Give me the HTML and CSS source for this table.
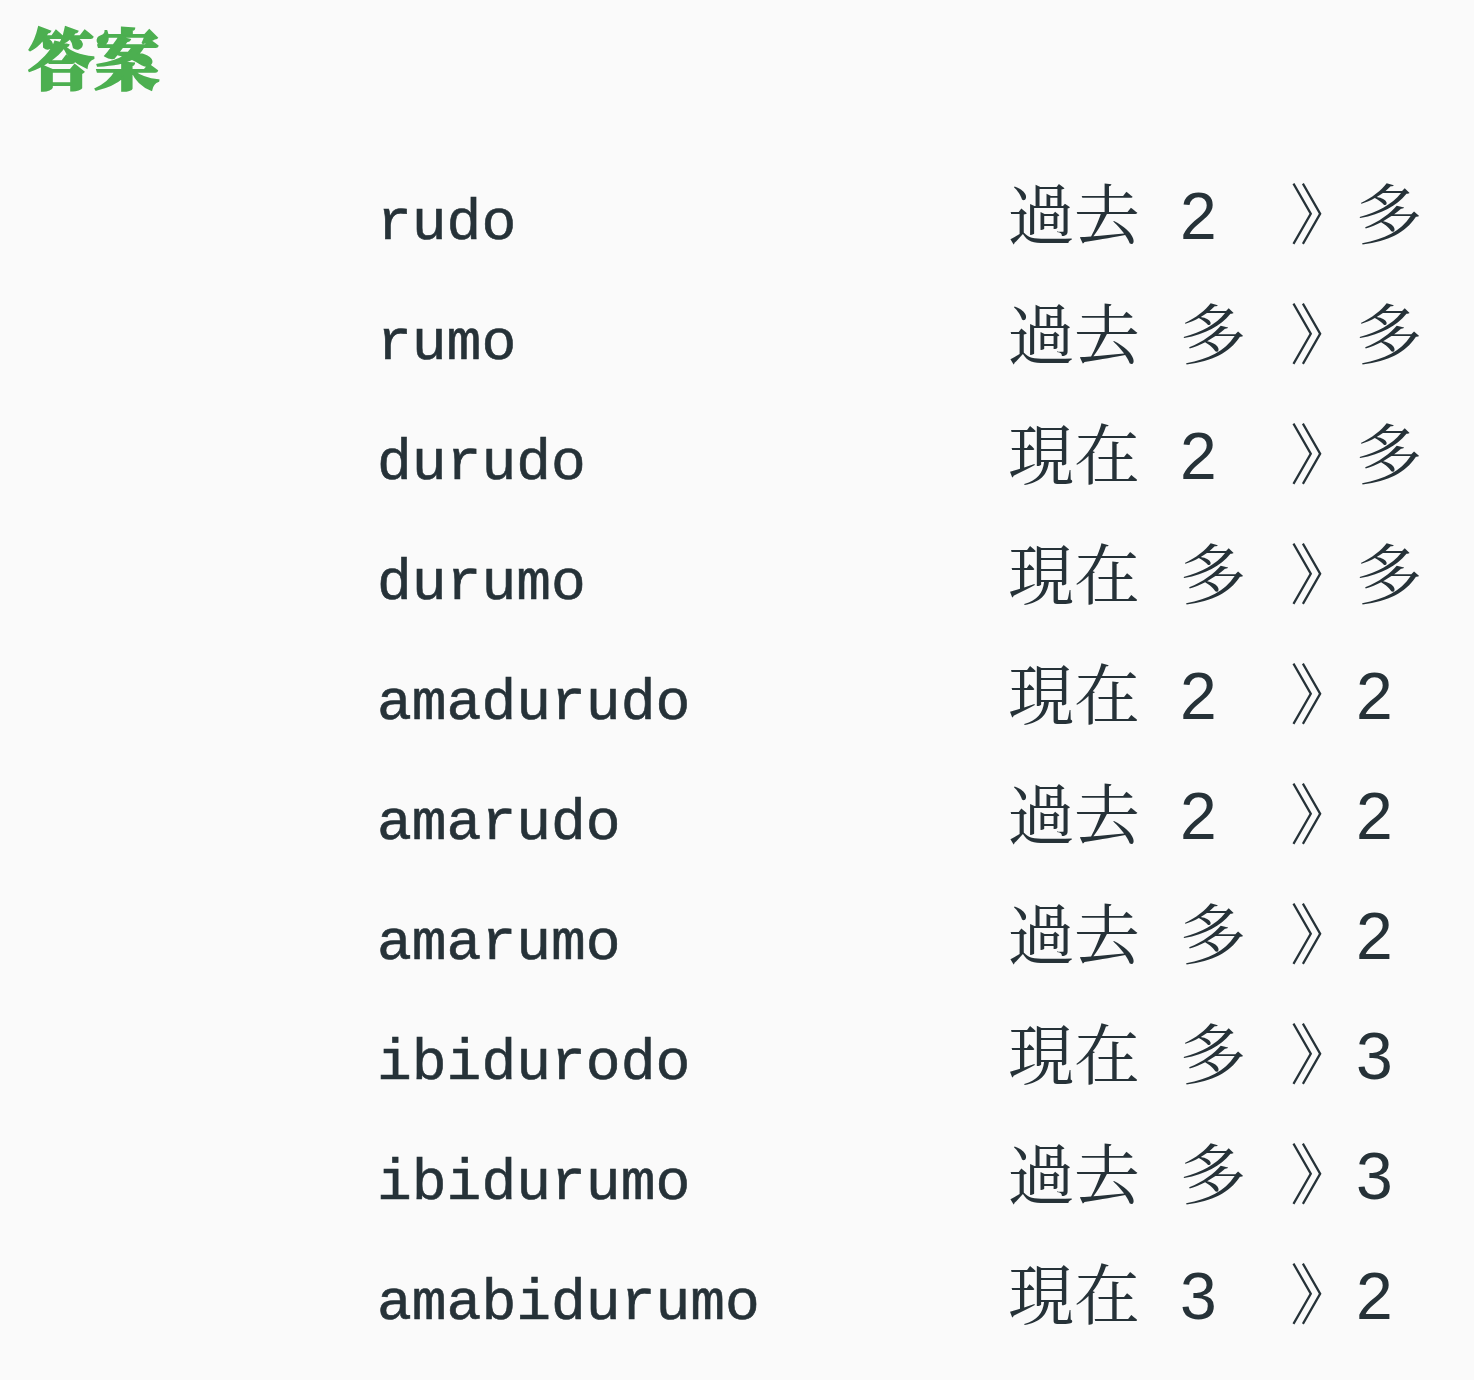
FILE: index.html
```html
<!DOCTYPE html>
<html lang="ja">
<head>
<meta charset="utf-8">
<title>答案</title>
<link rel="stylesheet" href="styles.css">
</head>
<body>
<h1 class="title">答案</h1>
<div class="answers">
  <div class="row"><span class="word">rudo</span><span class="tense">過去</span><span class="num">2</span><span class="result">》多</span></div>
  <div class="row"><span class="word">rumo</span><span class="tense">過去</span><span class="num">多</span><span class="result">》多</span></div>
  <div class="row"><span class="word">durudo</span><span class="tense">現在</span><span class="num">2</span><span class="result">》多</span></div>
  <div class="row"><span class="word">durumo</span><span class="tense">現在</span><span class="num">多</span><span class="result">》多</span></div>
  <div class="row"><span class="word">amadurudo</span><span class="tense">現在</span><span class="num">2</span><span class="result">》2</span></div>
  <div class="row"><span class="word">amarudo</span><span class="tense">過去</span><span class="num">2</span><span class="result">》2</span></div>
  <div class="row"><span class="word">amarumo</span><span class="tense">過去</span><span class="num">多</span><span class="result">》2</span></div>
  <div class="row"><span class="word">ibidurodo</span><span class="tense">現在</span><span class="num">多</span><span class="result">》3</span></div>
  <div class="row"><span class="word">ibidurumo</span><span class="tense">過去</span><span class="num">多</span><span class="result">》3</span></div>
  <div class="row"><span class="word">amabidurumo</span><span class="tense">現在</span><span class="num">3</span><span class="result">》2</span></div>
</div>
</body>
</html>
```

FILE: styles.css
```css
html, body {
  margin: 0;
  padding: 0;
  background: #fafafa;
}

body {
  color: #263238;
  font-family: "Liberation Sans", "Noto Serif CJK JP", "Noto Sans CJK JP", sans-serif;
  font-size: 66px;
}

.title {
  margin: 0;
  padding: 16px 0 0 28px;
  font-size: 66px;
  line-height: 79px;
  font-weight: 900;
  color: #4caf50;
  font-family: "Noto Serif CJK JP", "Noto Sans CJK JP", serif;
  -webkit-text-stroke: 2px #4caf50;
}

.answers {
  margin-top: 61px;
  padding-left: 377px;
}

.row {
  display: grid;
  grid-template-columns: 631px 172px 109px auto;
  align-items: baseline;
  height: 120px;
  line-height: 120px;
}

.word {
  font-family: "Liberation Mono", monospace;
  font-weight: 400;
  font-size: 58px;
  -webkit-text-stroke: 0.6px #263238;
}

.tense, .num, .result {
  white-space: nowrap;
}

.result {
  margin-left: 1px;
}
```
